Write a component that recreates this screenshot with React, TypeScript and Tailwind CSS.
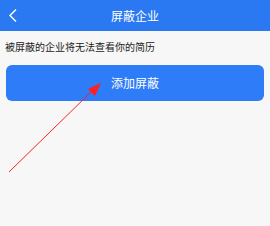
import React from "react";

export default function App() {
  return (
    <div
      className="relative w-[270px] h-[226px] bg-[#f7f7f7] overflow-hidden"
      style={{ fontFamily: '"Noto Sans CJK SC", "Noto Sans", sans-serif' }}
    >
      <div className="h-[31px] bg-[#2a78f2] flex items-center relative">
        <svg className="absolute left-[8px] top-[8px]" width="10" height="15" viewBox="0 0 10 15">
          <path d="M8 1.5 L2 7.5 L8 13.5" fill="none" stroke="white" strokeWidth="1.4" />
        </svg>
        <div className="flex-1 text-center text-white text-[12px] leading-none">屏蔽企业</div>
      </div>
      <div className="px-[5px] pt-[10px] text-[10px] leading-[12px] text-[#222]">被屏蔽的企业将无法查看你的简历</div>
      <div className="px-[6px] pt-[12px]">
        <div className="h-[36px] rounded-[6px] bg-[#2e7cf7] flex items-center justify-center text-white text-[12px]">
          添加屏蔽
        </div>
      </div>
      <svg className="absolute left-0 top-0" width="270" height="226" viewBox="0 0 270 226">
        <line x1="9" y1="172" x2="92" y2="91" stroke="#ff2020" strokeWidth="1" />
        <polygon points="101,83 88,89 95,96" fill="#ff2020" />
      </svg>
    </div>
  );
}
